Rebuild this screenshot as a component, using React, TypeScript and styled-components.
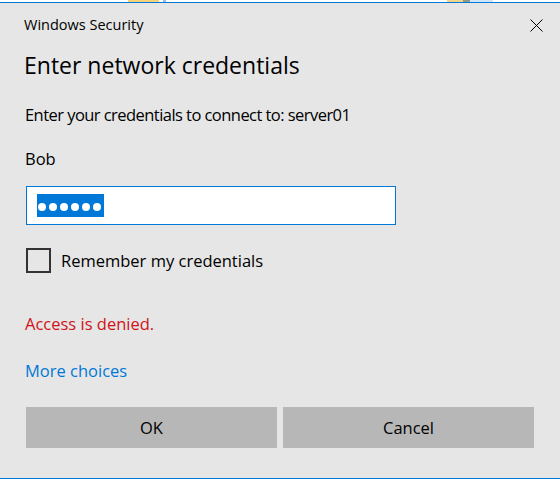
import styled, { createGlobalStyle } from "styled-components";

const GlobalStyle = createGlobalStyle`
  html,
  body {
    margin: 0;
    padding: 0;
    background: #ffffff;
  }

  body {
    font-family: "Open Sans", "Noto Sans", sans-serif;
    color: #000000;
  }
`;

const accent = "#0078d7";

const Desktop = styled.div`
  width: 560px;
  height: 479px;
  overflow: hidden;
  display: flex;
  flex-direction: column;
  background: #ffffff;
`;

// sliver of the desktop that shows above the dialog
const Backdrop = styled.div`
  height: 2px;
  flex-shrink: 0;
  display: flex;
`;

const Patch = styled.span<{ $w: number; $c: string }>`
  width: ${(p) => p.$w}px;
  background: ${(p) => p.$c};
`;

const Dialog = styled.section`
  flex: 1;
  display: flex;
  flex-direction: column;
  background: #e6e6e6;
  border-top: 1px solid ${accent};
  border-bottom: 1px solid ${accent};
`;

const TitleBar = styled.header`
  height: 44px;
  display: flex;
  align-items: center;
  justify-content: space-between;
  padding-left: 24px;
`;

const Caption = styled.span`
  font-size: 14.5px;
  line-height: 20px;
`;

const CloseButton = styled.button`
  width: 46px;
  height: 44px;
  margin-right: 1px;
  padding: 0;
  border: 0;
  background: transparent;
  display: flex;
  align-items: center;
  justify-content: center;
`;

const Body = styled.div`
  display: flex;
  flex-direction: column;
  padding: 0 26px;
`;

const Heading = styled.h1`
  margin: 2px 0 0 -2px;
  font-size: 23px;
  font-weight: 400;
  line-height: 32px;
`;

const Text = styled.p<{ $gap: number; $tone?: "error" | "link"; $tight?: boolean }>`
  margin: ${(p) => p.$gap}px 0 0 -1px;
  font-size: 16.5px;
  line-height: 22px;
  letter-spacing: ${(p) => (p.$tight ? "-0.55px" : "0")};
  color: ${(p) =>
    p.$tone === "error" ? "#cf1318" : p.$tone === "link" ? accent : "#000000"};
`;

const PasswordField = styled.div`
  margin-top: 16px;
  width: 370px;
  height: 39px;
  box-sizing: border-box;
  border: 1px solid ${accent};
  background: #ffffff;
  display: flex;
  align-items: center;
  padding-left: 10px;
`;

const Selection = styled.span`
  height: 23px;
  display: flex;
  align-items: center;
  gap: 3px;
  padding: 3px 3px 0 1px;
  box-sizing: border-box;
  background: ${accent};
`;

const Dot = styled.span`
  width: 8px;
  height: 8px;
  border-radius: 50%;
  background: #ffffff;
`;

const CheckRow = styled.label`
  margin-top: 23px;
  height: 25px;
  display: flex;
  align-items: center;
  gap: 10px;
  font-size: 16.5px;
`;

const CheckBox = styled.span`
  width: 25px;
  height: 25px;
  box-sizing: border-box;
  border: 2px solid #333333;
`;

const Actions = styled.div`
  margin-top: 25px;
  display: grid;
  grid-template-columns: 1fr 1fr;
  gap: 6px;
`;

const ActionButton = styled.button`
  height: 41px;
  border: 0;
  padding: 0;
  background: #b7b7b7;
  color: #000000;
  font-family: inherit;
  font-size: 16.5px;
`;

const CloseIcon = () => (
  <svg width="13" height="13" viewBox="0 0 13 13">
    <path d="M0.5 0.5 L12.5 12.5 M12.5 0.5 L0.5 12.5" stroke="#000" strokeWidth="1" />
  </svg>
);

const backdrop = [
  { w: 128, c: "#ffffff" },
  { w: 31, c: "#f4d27a" },
  { w: 4, c: "#ffffff" },
  { w: 3, c: "#8fc3ee" },
  { w: 281, c: "#ffffff" },
  { w: 16, c: "#f2d58c" },
  { w: 7, c: "#8d9b86" },
  { w: 23, c: "#cfe6f8" },
  { w: 67, c: "#ffffff" },
];

export default function App() {
  return (
    <Desktop>
      <GlobalStyle />
      <Backdrop>
        {backdrop.map((p, i) => (
          <Patch key={i} $w={p.w} $c={p.c} />
        ))}
      </Backdrop>
      <Dialog>
        <TitleBar>
          <Caption>Windows Security</Caption>
          <CloseButton aria-label="Close">
            <CloseIcon />
          </CloseButton>
        </TitleBar>
        <Body>
          <Heading>Enter network credentials</Heading>
          <Text $gap={23} $tight>
            Enter your credentials to connect to: server01
          </Text>
          <Text $gap={22}>Bob</Text>
          <PasswordField>
            <Selection>
              {Array.from({ length: 6 }, (_, i) => (
                <Dot key={i} />
              ))}
            </Selection>
          </PasswordField>
          <CheckRow>
            <CheckBox />
            Remember my credentials
          </CheckRow>
          <Text $gap={40} $tone="error">
            Access is denied.
          </Text>
          <Text $gap={25} $tone="link">
            More choices
          </Text>
          <Actions>
            <ActionButton>OK</ActionButton>
            <ActionButton>Cancel</ActionButton>
          </Actions>
        </Body>
      </Dialog>
    </Desktop>
  );
}
